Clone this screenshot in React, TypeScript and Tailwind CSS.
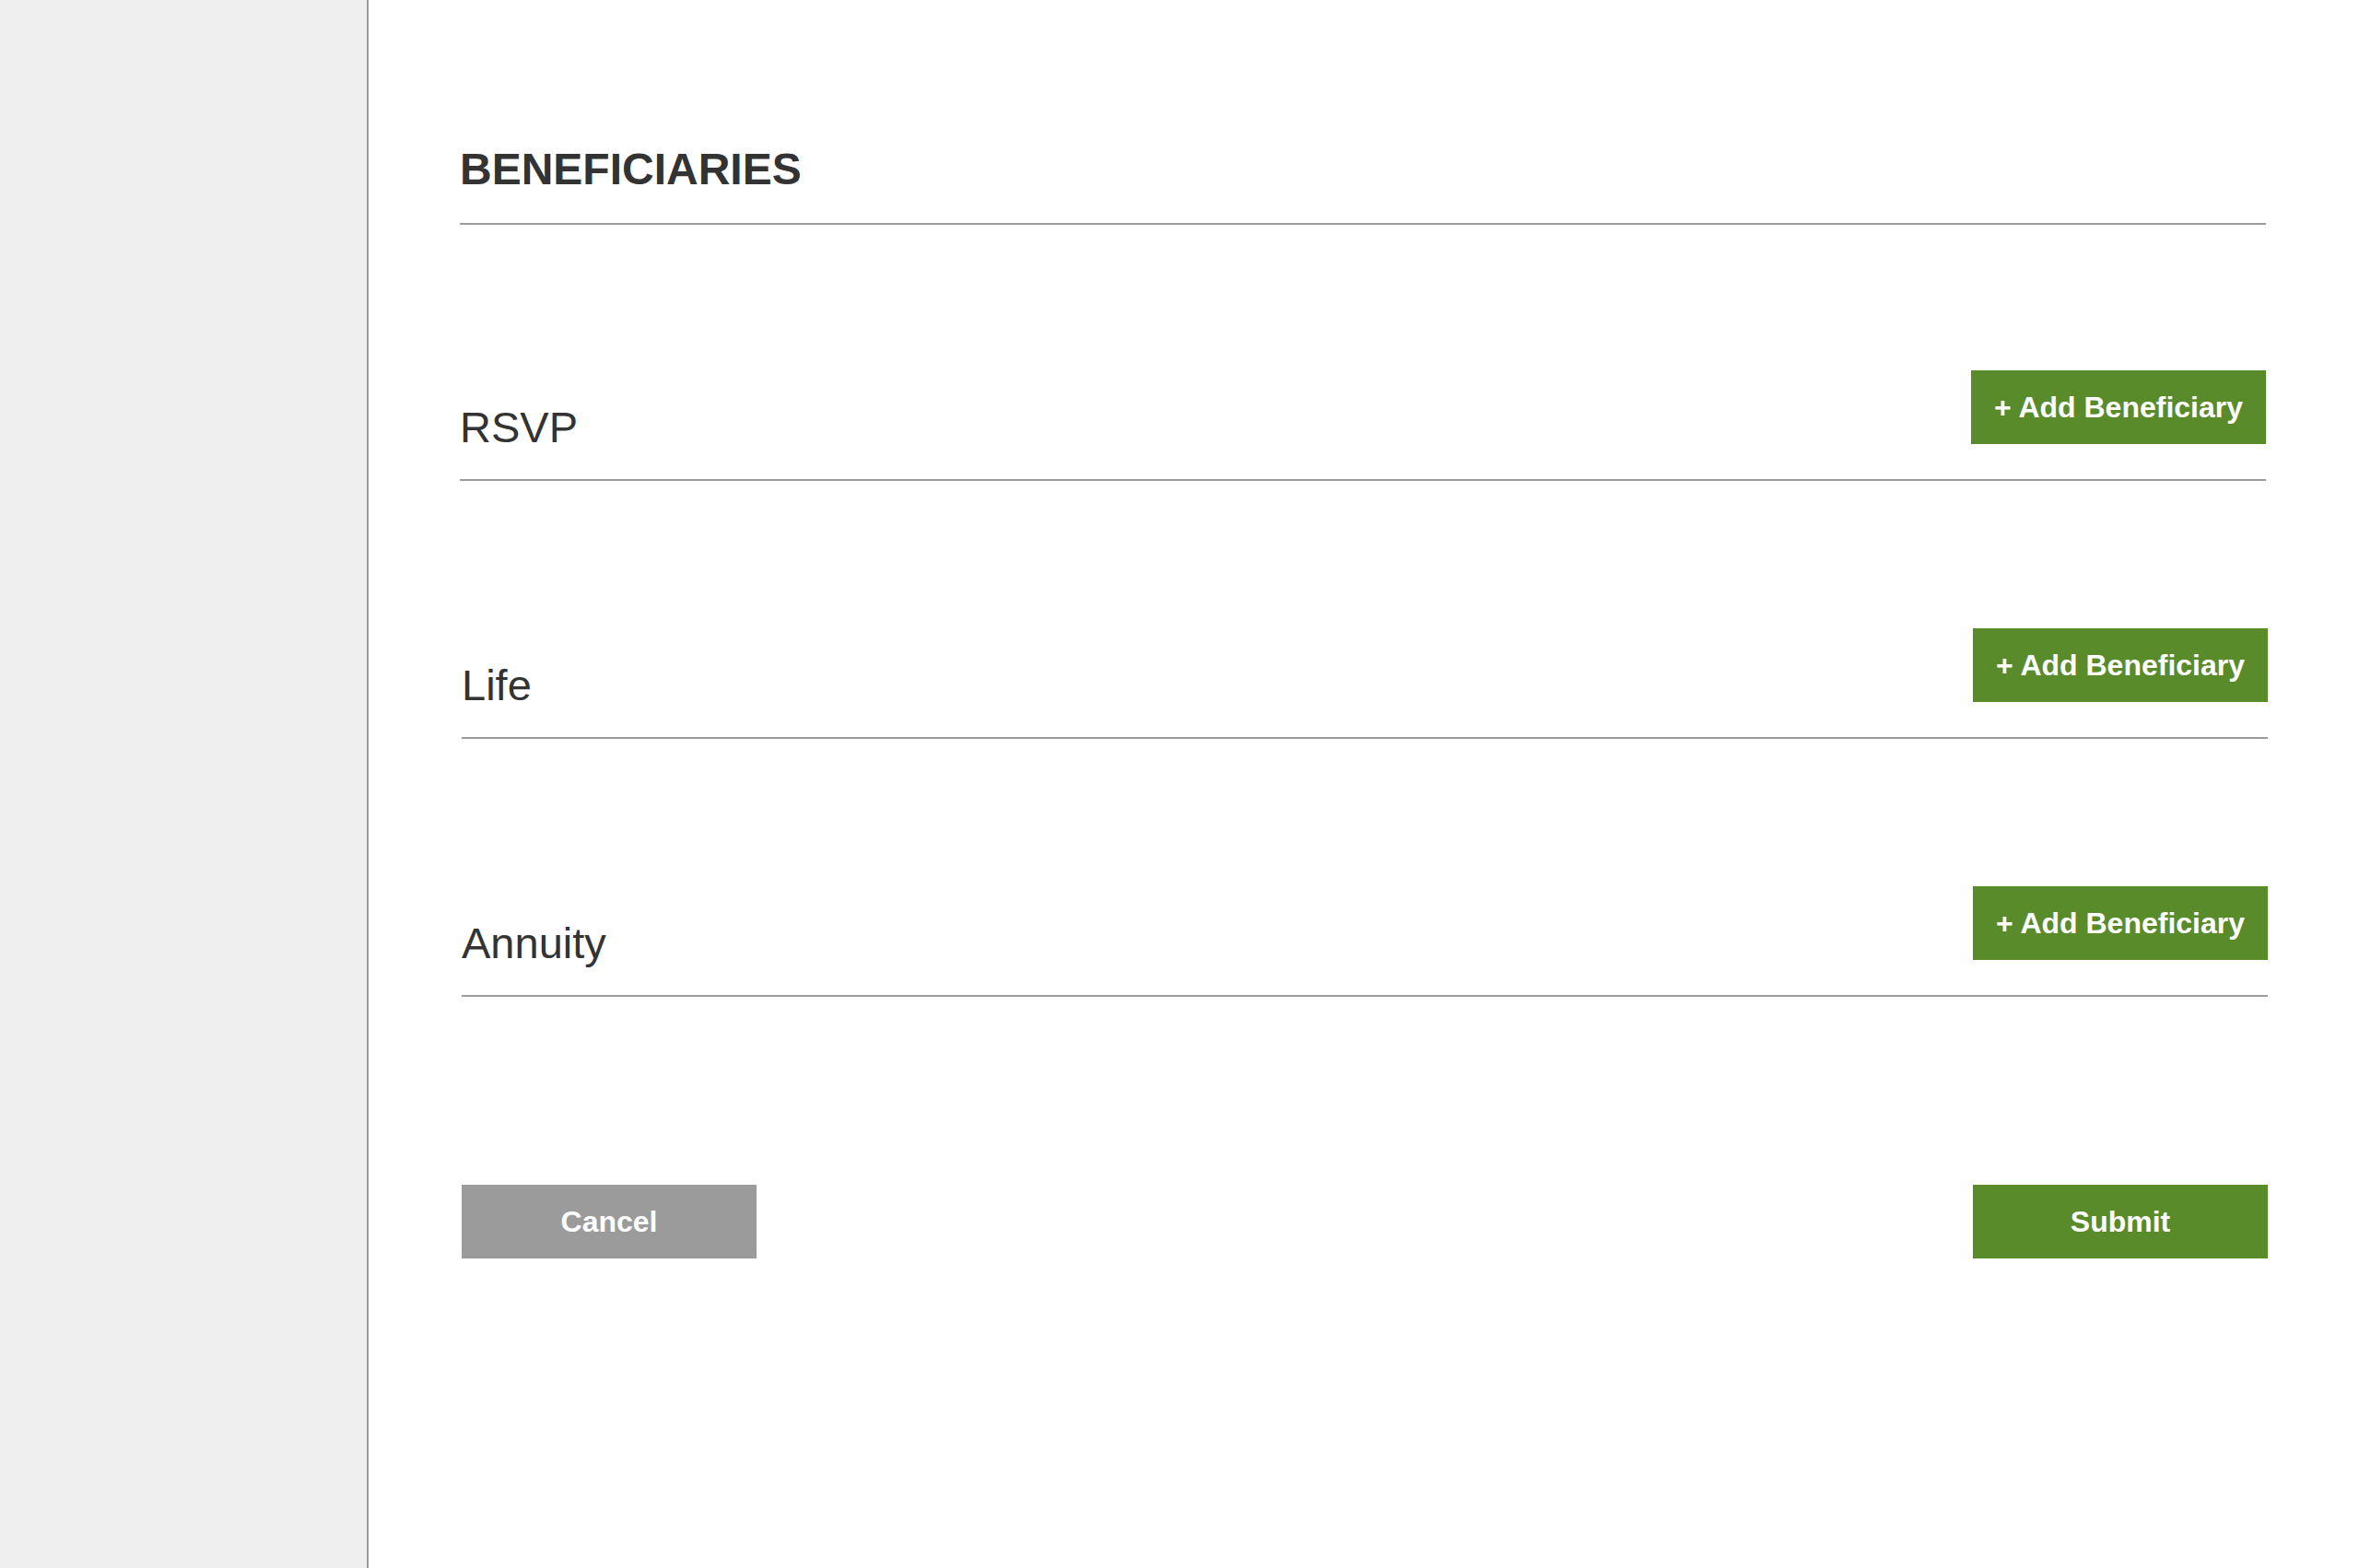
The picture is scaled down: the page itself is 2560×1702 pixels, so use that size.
import React from "react";

const font = { fontFamily: '"Liberation Sans", Arial, Helvetica, sans-serif' };

function Row({ label, first }: { label: string; first?: boolean }) {
  return (
    <div
      className={
        first
          ? "mt-[158px] flex items-end justify-between border-b-2 border-[#9b9b9b] pb-[38px]"
          : "mt-[160px] ml-[2px] mr-[-2px] flex items-end justify-between border-b-2 border-[#9b9b9b] pb-[38px]"
      }
    >
      <div className="text-[47px] leading-[37px] text-[#333333]">{label}</div>
      <button className="h-[80px] w-[320px] bg-[#5a8b2b] text-[32px] font-bold text-white">
        + Add Beneficiary
      </button>
    </div>
  );
}

export default function App() {
  return (
    <div className="flex h-[1702px] w-full overflow-hidden bg-white" style={font}>
      <aside className="w-[400px] shrink-0 border-r-2 border-[#9b9b9b] bg-[#efefef]" />
      <main className="flex-1 pl-[99px] pr-[101px] pt-[160px]">
        <h1 className="border-b-2 border-[#9b9b9b] pb-[34px] text-[48px] font-bold leading-[48px] text-[#333333]">
          BENEFICIARIES
        </h1>
        <Row label="RSVP" first />
        <Row label="Life" />
        <Row label="Annuity" />
        <div className="mt-[204px] ml-[2px] mr-[-2px] flex justify-between">
          <button className="h-[80px] w-[320px] bg-[#9b9b9b] text-[32px] font-bold text-white">
            Cancel
          </button>
          <button className="h-[80px] w-[320px] bg-[#5a8b2b] text-[32px] font-bold text-white">
            Submit
          </button>
        </div>
      </main>
    </div>
  );
}
